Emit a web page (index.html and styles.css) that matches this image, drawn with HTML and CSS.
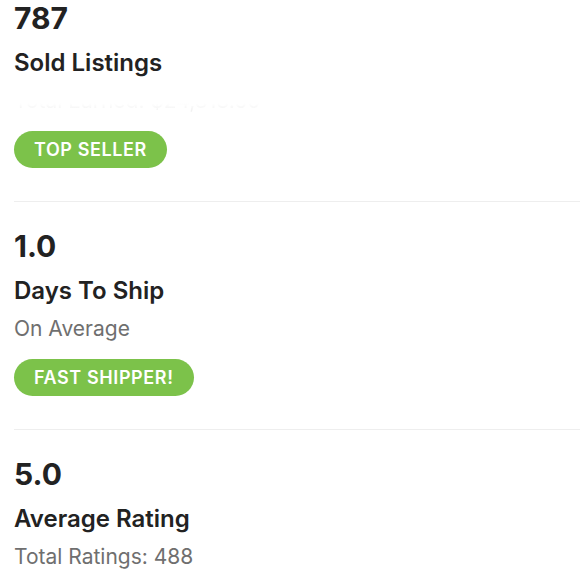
FILE: index.html
```html
<!DOCTYPE html>
<html lang="en">
<head>
<meta charset="utf-8">
<title>Seller Stats</title>
<link rel="stylesheet" href="styles.css">
</head>
<body>
<div class="stats">
  <section class="stat">
    <div class="stat-value">787</div>
    <div class="stat-title">Sold Listings</div>
    <div class="stat-sub faded">Total Earned: $24,318.50</div>
    <span class="badge">TOP SELLER</span>
  </section>
  <section class="stat">
    <div class="stat-value">1.0</div>
    <div class="stat-title">Days To Ship</div>
    <div class="stat-sub">On Average</div>
    <span class="badge">FAST SHIPPER!</span>
  </section>
  <section class="stat">
    <div class="stat-value">5.0</div>
    <div class="stat-title">Average Rating</div>
    <div class="stat-sub">Total Ratings: 488</div>
  </section>
</div>
</body>
</html>
```

FILE: styles.css
```css
html, body {
  margin: 0;
  padding: 0;
  background: #ffffff;
}

body {
  font-family: "Inter", "Noto Sans", sans-serif;
  color: #222222;
  overflow: hidden;
}

.stats {
  display: flex;
  flex-direction: column;
  margin-left: 14px;
}

.stat {
  display: flex;
  flex-direction: column;
  align-items: flex-start;
  padding: 26px 0 33px;
  border-bottom: 1px solid #eeeeee;
}

.stat:first-child {
  padding-top: 0;
}

.stat:last-child {
  border-bottom: none;
}

.stat-value {
  font-size: 30px;
  line-height: 36px;
  font-weight: 700;
  color: #222222;
}

.stat-title {
  margin-top: 12px;
  font-size: 24px;
  line-height: 30px;
  font-weight: 600;
  color: #222222;
}

.stat-sub {
  margin-top: 11px;
  font-size: 21px;
  line-height: 24px;
  color: #6f6f6f;
}

.faded {
  background: linear-gradient(to bottom, #ffffff 0%, #ffffff 60%, #ededed 100%);
  -webkit-background-clip: text;
  background-clip: text;
  color: transparent;
}

.badge {
  display: inline-flex;
  align-items: center;
  height: 37px;
  margin-top: 18px;
  padding: 0 20px;
  border-radius: 19px;
  background: #7cc24a;
  color: #ffffff;
  font-size: 18px;
  font-weight: 600;
  letter-spacing: 0.6px;
}
```
